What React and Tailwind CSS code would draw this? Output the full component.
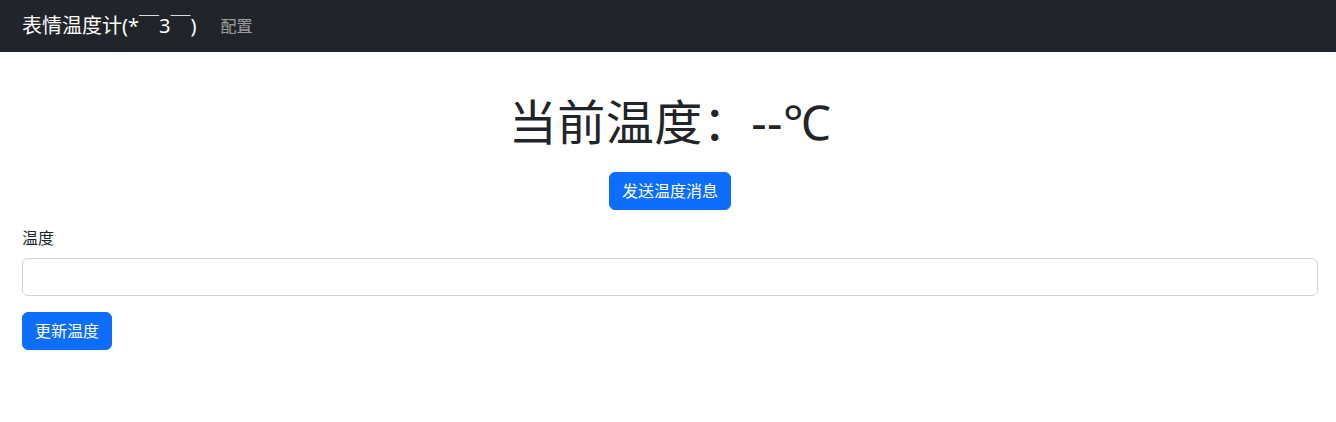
import React, { useState } from 'react';

const App = () => {
  const [temp, setTemp] = useState('');

  return (
    <div className='min-h-screen bg-white text-[#212529] font-["Noto_Sans","Noto_Sans_CJK_SC",sans-serif]'>
      {/* barra superior */}
      <nav className='h-[52px] bg-[#212529] flex items-center px-[22px]'>
        <a href="#" className='text-white text-[20px] leading-[30px] mr-4'>
          表情温度计(*￣3￣)
        </a>
        <a href="#" className='text-[16px] leading-6 px-2 text-white/55'>
          配置
        </a>
      </nav>

      <div className='pl-[22px] pr-[18px]'>
        <h1 className='text-center text-[48px] leading-[1.2] font-normal mt-[41px] tracking-[0.5px]'>
          当前温度：--℃
        </h1>

        <div className='flex justify-center mt-[21px]'>
          <button className='bg-[#0d6efd] text-white text-[16px] leading-6 px-3 py-[6px] border border-[#0d6efd] rounded-md'>
            发送温度消息
          </button>
        </div>

        <div className='mt-4'>
          <label className='block text-[16px] leading-6 mb-2'>温度</label>
          <input
            type="text"
            value={temp}
            onChange={(e) => setTemp(e.target.value)}
            className='block w-full h-[38px] border border-[#ced4da] rounded-md px-3 outline-none'
          />
        </div>

        <button className='mt-4 bg-[#0d6efd] text-white text-[16px] leading-6 px-3 py-[6px] border border-[#0d6efd] rounded-md'>
          更新温度
        </button>
      </div>
    </div>
  );
};

export default App;
